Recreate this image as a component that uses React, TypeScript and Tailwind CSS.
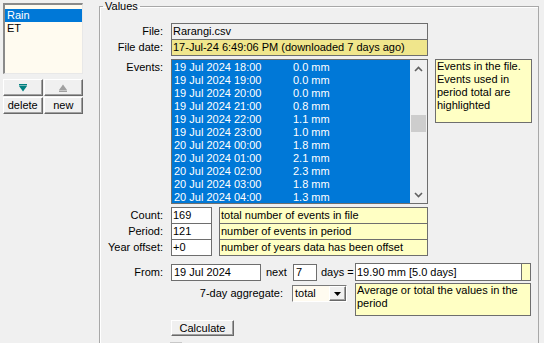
import React from "react";

const events: [string, string][] = [
  ["19 Jul 2024 18:00", "0.0 mm"],
  ["19 Jul 2024 19:00", "0.0 mm"],
  ["19 Jul 2024 20:00", "0.0 mm"],
  ["19 Jul 2024 21:00", "0.8 mm"],
  ["19 Jul 2024 22:00", "1.1 mm"],
  ["19 Jul 2024 23:00", "1.0 mm"],
  ["20 Jul 2024 00:00", "1.8 mm"],
  ["20 Jul 2024 01:00", "2.1 mm"],
  ["20 Jul 2024 02:00", "2.3 mm"],
  ["20 Jul 2024 03:00", "1.8 mm"],
  ["20 Jul 2024 04:00", "1.3 mm"],
];

const stats = [
  { label: "Count:", value: "169", note: "total number of events in file" },
  { label: "Period:", value: "121", note: "number of events in period" },
  { label: "Year offset:", value: "+0", note: "number of years data has been offset" },
];

// classic raised button look
const btn =
  "flex items-center justify-center bg-[#f0f0f0] border border-t-white border-l-white border-b-[#696969] border-r-[#696969] shadow-[inset_-1px_-1px_0_#a0a0a0]";

const Chevron = ({ up }: { up?: boolean }) => (
  <svg width="9" height="6" viewBox="0 0 9 6">
    <path
      d={up ? "M1 5 L4.5 1.5 L8 5" : "M1 1 L4.5 4.5 L8 1"}
      fill="none"
      stroke="#606060"
      strokeWidth="1.6"
    />
  </svg>
);

export default function App() {
  return (
    <div className="w-[544px] h-[343px] overflow-hidden bg-[#f0f0f0] flex text-[11px] leading-[13px] text-black font-['Liberation_Sans',Arial,sans-serif]">
      {/* left column: series list + buttons */}
      <div className="w-[99px] shrink-0 pl-[3px] pt-[3px]">
        <div className="w-[80px] h-[71px] bg-[#fffbf0] border-l-2 border-t-2 border-r border-b border-l-[#8a8a8a] border-t-[#8a8a8a] border-r-[#e8e8e8] border-b-[#e8e8e8] pt-[4px]">
          <div className="h-[13px] bg-[#0078d7] text-white pl-[2px]">Rain</div>
          <div className="h-[13px] pl-[2px]">ET</div>
        </div>
        <div className="mt-[5px] grid grid-cols-2 gap-x-[1px] gap-y-[1px] w-[80px]">
          <div className={`${btn} h-[17px]`}>
            <svg width="8" height="8" viewBox="0 0 8 8">
              <rect x="0" y="0" width="8" height="1.5" fill="#008080" />
              <path d="M0 2 L8 2 L4 7.5 Z" fill="#008080" />
            </svg>
          </div>
          <div className={`${btn} h-[17px]`}>
            <svg width="8" height="8" viewBox="0 0 8 8">
              <path d="M4 0.5 L8 6 L0 6 Z" fill="#a0a0a0" />
              <rect x="0" y="6.5" width="8" height="1.5" fill="#a0a0a0" />
            </svg>
          </div>
          <div className={`${btn} h-[17px]`}>delete</div>
          <div className={`${btn} h-[17px]`}>new</div>
        </div>
      </div>

      {/* Values group */}
      <fieldset className="w-[440px] h-[400px] shrink-0 border border-[#a8a8a8] shadow-[inset_1px_1px_0_white]">
        <legend className="ml-[3px] px-[2px]">Values</legend>

        <div className="mt-[10px] flex items-center h-[17px]">
          <div className="w-[63px] text-right">File:</div>
          <div className="ml-[8px] w-[257px] h-[17px] bg-[#f0f0f0] border border-[#6e6e6e] pl-[1px] leading-[15px]">
            Rarangi.csv
          </div>
        </div>
        <div className="-mt-px flex items-center h-[17px]">
          <div className="w-[63px] text-right">File date:</div>
          <div className="ml-[8px] w-[257px] h-[17px] bg-[#f0e68c] border border-[#6e6e6e] pl-[1px] leading-[15px] whitespace-nowrap overflow-hidden">
            17-Jul-24 6:49:06 PM (downloaded 7 days ago)
          </div>
        </div>

        <div className="mt-[3px] flex items-start">
          <div className="w-[63px] text-right pt-[2px]">Events:</div>
          <div className="ml-[8px] w-[257px] h-[145px] border border-[#6e6e6e] flex">
            <div className="flex-1 bg-[#0078d7] text-white pt-[1px]">
              {events.map(([d, v]) => (
                <div key={d} className="h-[13px] flex whitespace-nowrap">
                  <span className="w-[121px] pl-[2px]">{d}</span>
                  <span>{v}</span>
                </div>
              ))}
            </div>
            <div className="w-[17px] bg-[#f0f0f0] flex flex-col items-center">
              <div className="h-[17px] flex items-center justify-center">
                <Chevron up />
              </div>
              <div className="mt-[38px] w-[15px] h-[17px] bg-[#cdcdcd]" />
              <div className="mt-auto h-[17px] flex items-center justify-center">
                <Chevron />
              </div>
            </div>
          </div>
          <div className="ml-[7px] w-[97px] h-[64px] bg-[#ffffc4] border border-[#6e6e6e] px-[1px]">
            Events in the file. Events used in period total are highlighted
          </div>
        </div>

        <div className="mt-[3px]">
          {stats.map((s, i) => (
            <div key={s.label} className={`flex items-center h-[17px] ${i > 0 ? "-mt-px" : ""}`}>
              <div className="w-[63px] text-right whitespace-nowrap">{s.label}</div>
              <div className="ml-[8px] w-[41px] h-[17px] bg-white border border-[#6e6e6e] pl-[1px] leading-[15px]">
                {s.value}
              </div>
              <div className="ml-[7px] w-[209px] h-[17px] bg-[#ffffc4] border border-[#6e6e6e] pl-[1px] leading-[15px] whitespace-nowrap">
                {s.note}
              </div>
            </div>
          ))}
        </div>

        <div className="mt-[7px] flex items-center h-[18px]">
          <div className="w-[63px] text-right">From:</div>
          <div className="ml-[8px] w-[90px] h-[17px] bg-white border border-[#6e6e6e] pl-[2px] leading-[15px]">
            19 Jul 2024
          </div>
          <div className="w-[32px] pl-[5px]">next</div>
          <div className="w-[24px] h-[17px] bg-white border border-[#6e6e6e] pl-[2px] leading-[15px]">7</div>
          <div className="w-[38px] pl-[4px] whitespace-nowrap">days =</div>
          <div className="w-[167px] h-[18px] bg-white border border-[#6e6e6e] pl-[1px] leading-[16px]">
            19.90 mm [5.0 days]
          </div>
          <div className="-ml-px w-[10px] h-[18px] bg-[#ffffc4] border border-[#6e6e6e]" />
        </div>

        <div className="mt-[2px] flex items-start">
          <div className="w-[183px] text-right pt-[4px] whitespace-nowrap">7-day aggregate:</div>
          <div className="ml-[9px] mt-[2px] w-[55px] h-[17px] bg-[#fffbf0] border border-t-[#7a7a7a] border-l-[#7a7a7a] border-b-white border-r-white flex">
            <div className="flex-1 pl-[2px] leading-[15px]">total</div>
            <div className={`${btn} w-[17px] h-[15px]`}>
              <svg width="7" height="4" viewBox="0 0 7 4">
                <path d="M0 0 L7 0 L3.5 4 Z" fill="black" />
              </svg>
            </div>
          </div>
          <div className="ml-[8px] w-[176px] h-[33px] bg-[#ffffc4] border border-[#6e6e6e] pl-[1px]">
            Average or total the values in the period
          </div>
        </div>

        <div className={`${btn} ml-[71px] mt-[4px] w-[63px] h-[16px]`}>Calculate</div>
        <div className="ml-[70px] mt-[6px] w-[12px] h-[4px] bg-[#c8c8c8]" />
      </fieldset>
    </div>
  );
}
